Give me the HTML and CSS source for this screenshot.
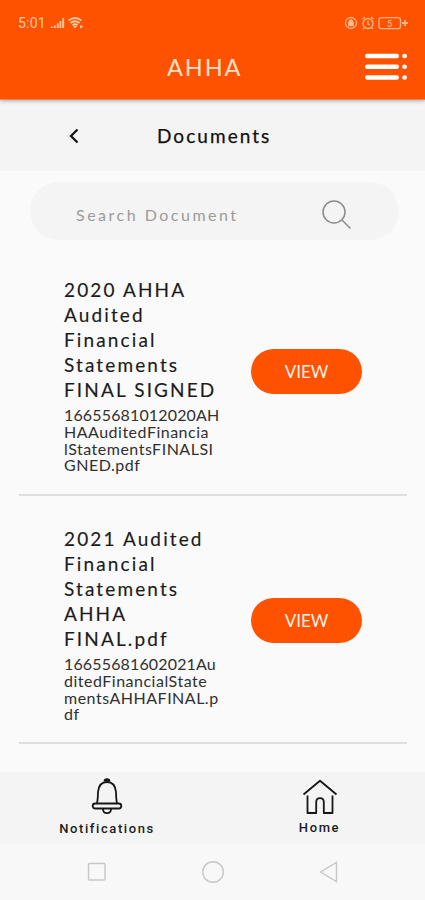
FILE: index.html
```html
<!DOCTYPE html>
<html lang="en">
<head>
<meta charset="utf-8">
<title>Documents</title>
<link rel="stylesheet" href="styles.css">
</head>
<body>
<div class="screen">
  <header class="header">
    <div class="status">
      <span class="clock">5:01</span>
      <svg class="signal" width="34" height="14" viewBox="0 0 34 14">
        <path d="M1.700 12v-1.500M4.700 12V9.500M7.700 12V7.500M10.400 12V5M13.200 12V2" stroke="#ffc8a2" stroke-width="1.900"/>
        <path d="M18.500 4.500q6.500-5 13 0M20.500 7q4.500-3.500 9 0M22.500 9.300q2.500-2 5 0" fill="none" stroke="#ffc8a2" stroke-width="2"/>
        <path d="M23 10h4l-2 2.500zM30 9l3.500 1.800-3.500 1.800z" fill="#ffc8a2"/>
      </svg>
      <svg class="system" width="64" height="16" viewBox="0 0 64 16" fill="none" stroke="#ffb586" stroke-width="1.300">
        <circle cx="6" cy="8" r="5.500"/>
        <path d="M3.800 7.500h4.400v3.200H3.800zM4.500 7.500V6q1.500-2 3 0v1.500" fill="#ffc8a2"/>
        <circle cx="23" cy="8.500" r="5"/>
        <path d="M23 5.500V9l2 1M17.500 4l2.500-2M28.500 4L26 2M19.500 12.500L18 14M26.500 12.500l1.500 1.500"/>
        <rect x="34" y="2.700" width="21.500" height="11" rx="2.500"/>
        <path d="M57 8h6M60 5v6" stroke-width="1.800"/>
        <text x="42" y="11.500" class="level">5</text>
      </svg>
    </div>
    <div class="bar">
      <h1 class="brand">AHHA</h1>
      <svg class="menu" width="44" height="30" viewBox="0 0 44 30" stroke="#fff" stroke-width="4.600" stroke-linecap="round">
        <path d="M3.300 4h29.400M3.300 14.800h29.400M3.300 25.500h29.400M40.500 4h.2M40.500 14.800h.2M40.500 25.500h.2"/>
      </svg>
    </div>
  </header>
  <div class="subhead">
    <svg class="back" width="12" height="18" viewBox="0 0 12 18"><path d="M10.500 2.500L4 9l6.500 6.500" fill="none" stroke="#111" stroke-width="2.200"/></svg>
    <h2 class="page-title">Documents</h2>
  </div>
  <main class="content">
    <div class="search">
      <span class="placeholder">Search Document</span>
      <svg width="30" height="30" viewBox="0 0 30 30" fill="none" stroke="#8b8b8b" stroke-width="1.500"><circle cx="12" cy="12" r="11"/><path d="M20 20l8.500 8.500"/></svg>
    </div>
    <article class="doc">
      <div class="info">
        <h3 class="name">2020 AHHA<br>Audited<br>Financial<br>Statements<br>FINAL SIGNED</h3>
        <p class="file">16655681012020AH<br>HAAuditedFinancia<br>lStatementsFINALSI<br>GNED.pdf</p>
      </div>
      <button class="view">VIEW</button>
    </article>
    <article class="doc">
      <div class="info">
        <h3 class="name">2021 Audited<br>Financial<br>Statements<br>AHHA<br>FINAL.pdf</h3>
        <p class="file">16655681602021Au<br>ditedFinancialState<br>mentsAHHAFINAL.p<br>df</p>
      </div>
      <button class="view">VIEW</button>
    </article>
  </main>
  <nav class="tabs">
    <div class="tab">
      <svg width="32" height="38" viewBox="0 0 32 38" fill="none" stroke="#161616" stroke-width="1.800">
        <path d="M6 26Q7 20 7 14Q8 4 16 4T25 14Q25 20 26 26"/>
        <path d="M13.500 3.500q0-2.300 2.500-2.300T18.500 3.500" fill="#161616"/>
        <rect x="1.700" y="25.500" width="28.600" height="5" rx="2.500"/>
        <path d="M12 31q0 4.200 4 4.200t4-4.200"/>
      </svg>
      <span class="label">Notifications</span>
    </div>
    <div class="tab home">
      <svg width="36" height="36" viewBox="0 0 36 36" fill="none" stroke="#161616" stroke-width="1.800" stroke-linejoin="round">
        <path d="M1.500 15.500L18 1.800l16.500 13.700"/>
        <path d="M5.500 16.500V34h8.700V23q0-3.800 3.800-3.800t3.800 3.800v11h8.700V16.500"/>
      </svg>
      <span class="label">Home</span>
    </div>
  </nav>
  <footer class="system-nav">
    <svg width="20" height="20" viewBox="0 0 20 20"><rect x="1.500" y="1.500" width="16.500" height="16.500" rx="1"/></svg>
    <svg width="24" height="24" viewBox="0 0 24 24"><circle cx="12" cy="12" r="10.300"/></svg>
    <svg width="20" height="24" viewBox="0 0 20 24"><path d="M17.500 2.500v19L1.500 12z"/></svg>
  </footer>
</div>
</body>
</html>
```
FILE: styles.css
```css
* { box-sizing: border-box; }
body { margin: 0; font-family: Lato, "Open Sans", sans-serif; color: #1c1c1c; background: #fafafa; }
h1, h2, h3, p { margin: 0; font-weight: 400; }
svg { display: block; flex: none; }
.screen { width: 425px; height: 900px; display: flex; flex-direction: column; overflow: hidden; }
.header { height: 100px; flex: none; background: #ff5200; border-bottom: 1px solid #e8824e; box-shadow: 0 1px 4px rgba(0, 0, 0, .3); z-index: 1; }
.status { height: 46px; display: flex; align-items: center; padding: 0 16px 0 18px; color: #ffc8a2; }
.clock { width: 32px; font: 400 14px/16px Roboto, sans-serif; letter-spacing: .2px; }
.system { margin-left: auto; }
.level { font: 9px Roboto, sans-serif; fill: #ffc8a2; stroke: none; }
.bar { height: 42px; display: flex; align-items: center; justify-content: flex-end; padding-right: 17px; }
.brand { width: 78px; margin-right: 119px; font-size: 23.500px; letter-spacing: 1.900px; line-height: 42px; color: #ffe0c8; }
.subhead { height: 71px; flex: none; background: #f4f4f4; display: flex; align-items: center; padding-left: 67px; }
.page-title { margin-left: 78px; font-size: 19px; letter-spacing: 2.050px; color: #111; -webkit-text-stroke: .25px #111; }
.content { flex: 1; padding: 11px 18px 0 19px; }
.search { height: 58px; margin: 0 8px 0 11px; border-radius: 29px; background: #f4f4f4; display: flex; align-items: center; justify-content: space-between; padding: 7px 47px 0 46px; }
.placeholder { font-size: 16px; letter-spacing: 2.500px; color: #9b9b9b; }
.doc { height: 248px; border-bottom: 2px solid #dedede; display: flex; align-items: center; justify-content: space-between; padding: 2px 45px 0 45px; }
.search + .doc { height: 256px; padding-top: 8px; }
.info { width: 170px; padding-top: 9px; }
.name { margin-bottom: 5px; font-size: 19px; line-height: 25px; letter-spacing: 2.120px; white-space: nowrap; -webkit-text-stroke: .15px #1c1c1c; }
.file { font-size: 16px; line-height: 16.600px; letter-spacing: .500px; white-space: nowrap; color: #303030; }
.file::first-line { letter-spacing: .150px; }
.view { width: 111px; height: 45px; border: 0; border-radius: 23px; background: #ff5200; color: #fff2e8; font: 17px Lato, sans-serif; padding: 0; }
.tabs { height: 72px; flex: none; background: #f4f4f4; display: flex; }
.tab { width: 214px; display: flex; flex-direction: column; align-items: center; padding-top: 6px; }
.tab.home { width: 211px; padding-top: 7px; }
.label { margin-top: 4px; font: 500 13px/18px Roboto, sans-serif; letter-spacing: 1.600px; }
.system-nav { height: 56px; flex: none; background: #f8f8f8; display: flex; align-items: center; justify-content: space-between; padding: 0 86px 0 87px; }
.system-nav svg { fill: none; stroke: #c7c7c7; stroke-width: 1.400; }
```
